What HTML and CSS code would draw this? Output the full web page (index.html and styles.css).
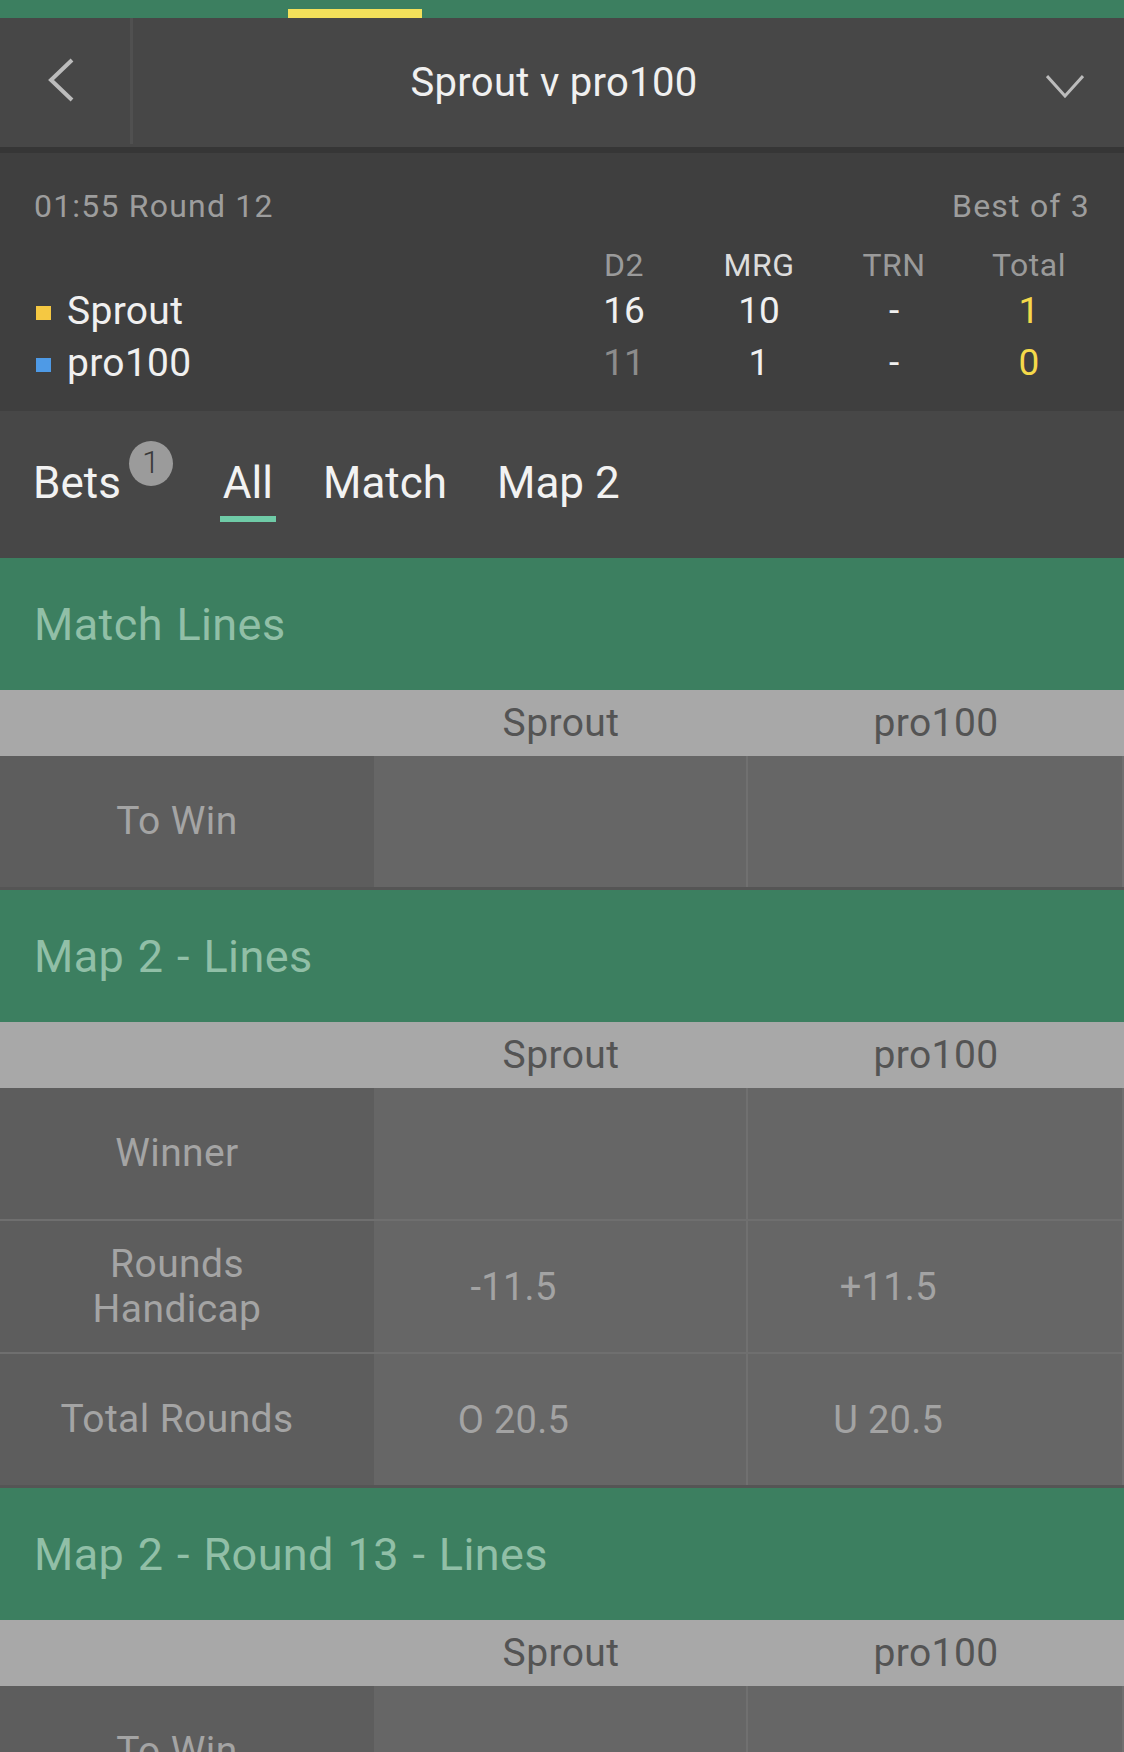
FILE: index.html
```html
<!DOCTYPE html>
<html lang="en">
<head>
    <meta charset="UTF-8">
    <meta name="viewport" content="width=device-width, initial-scale=1.0">
    <title>Sprout v pro100</title>
    <link rel="stylesheet" href="styles.css">
</head>
<body>
    <!-- Top nav strip -->
    <div class="top-strip">
        <span class="top-strip-mark"></span>
    </div>

    <!-- Event header -->
    <header class="event-header">
        <div class="back">
            <svg width="26" height="44" viewBox="0 0 26 44">
                <polyline points="24,2 3,22 24,42" fill="none" stroke="#bcbcbc" stroke-width="4"/>
            </svg>
        </div>
        <div class="event-title">Sprout v pro100</div>
        <div class="toggle">
            <svg width="38" height="24" viewBox="0 0 38 24">
                <polyline points="1,2 19,22 37,2" fill="none" stroke="#bcbcbc" stroke-width="3"/>
            </svg>
        </div>
    </header>

    <!-- Scoreboard -->
    <section class="scoreboard">
        <div class="score-meta">
            <span>01:55 Round 12</span>
            <span>Best of 3</span>
        </div>
        <div class="score-grid">
            <span></span>
            <span class="col-head">D2</span>
            <span class="col-head current">MRG</span>
            <span class="col-head">TRN</span>
            <span class="col-head">Total</span>

            <span class="team"><i class="swatch yellow"></i>Sprout</span>
            <span class="score">16</span>
            <span class="score">10</span>
            <span class="score">-</span>
            <span class="score total">1</span>

            <span class="team"><i class="swatch blue"></i>pro100</span>
            <span class="score dim">11</span>
            <span class="score">1</span>
            <span class="score">-</span>
            <span class="score total">0</span>
        </div>
    </section>

    <!-- Tabs -->
    <nav class="tabs">
        <div class="tab"><span class="tab-label">Bets<span class="badge">1</span></span></div>
        <div class="tab active"><span class="tab-label">All</span></div>
        <div class="tab"><span class="tab-label">Match</span></div>
        <div class="tab"><span class="tab-label">Map 2</span></div>
    </nav>

    <!-- Markets -->
    <section class="market">
        <div class="market-title">Match Lines</div>
        <div class="market-head">
            <span></span>
            <span>Sprout</span>
            <span>pro100</span>
        </div>
        <div class="market-row">
            <div class="market-label">To Win</div>
            <div class="odds"></div>
            <div class="odds"></div>
        </div>
    </section>

    <section class="market">
        <div class="market-title">Map 2 - Lines</div>
        <div class="market-head">
            <span></span>
            <span>Sprout</span>
            <span>pro100</span>
        </div>
        <div class="market-row">
            <div class="market-label">Winner</div>
            <div class="odds"></div>
            <div class="odds"></div>
        </div>
        <div class="market-row">
            <div class="market-label">Rounds Handicap</div>
            <div class="odds"><span class="line">-11.5</span></div>
            <div class="odds"><span class="line">+11.5</span></div>
        </div>
        <div class="market-row">
            <div class="market-label">Total Rounds</div>
            <div class="odds"><span class="line">O 20.5</span></div>
            <div class="odds"><span class="line">U 20.5</span></div>
        </div>
    </section>

    <section class="market">
        <div class="market-title">Map 2 - Round 13 - Lines</div>
        <div class="market-head">
            <span></span>
            <span>Sprout</span>
            <span>pro100</span>
        </div>
        <div class="market-row">
            <div class="market-label">To Win</div>
            <div class="odds"></div>
            <div class="odds"></div>
        </div>
    </section>
</body>
</html>
```

FILE: styles.css
```css
/* Live event page, dark theme */
body {
    margin: 0;
    padding: 0;
    background-color: #5d5d5d;
    font-family: Roboto, "Liberation Sans", sans-serif;
    color: #f0f0f0;
    overflow: hidden;
}

/* Top strip */
.top-strip {
    height: 18px;
    background-color: #3c7f60;
}

.top-strip-mark {
    display: block;
    width: 134px;
    height: 9px;
    margin-left: 288px;
    position: relative;
    top: 9px;
    background-color: #f3e05a;
}

/* Event header */
.event-header {
    display: flex;
    align-items: center;
    height: 129px;
    background-color: #474747;
    border-bottom: 6px solid #363636;
}

.back {
    width: 82px;
    height: 126px;
    padding-left: 48px;
    display: flex;
    align-items: center;
    align-self: flex-start;
    border-right: 3px solid #505050;
}

.back svg {
    margin-top: -2px;
}

.event-title {
    flex: 1;
    text-align: center;
    font-size: 40px;
    letter-spacing: 0.3px;
    color: #f0f0f0;
}

.toggle {
    width: 109px;
    padding-right: 40px;
    display: flex;
    justify-content: flex-end;
    margin-top: 6px;
}

/* Scoreboard */
.scoreboard {
    background-color: #3f3f3f;
    padding: 31px 40px 22px 34px;
}

.score-meta {
    display: flex;
    justify-content: space-between;
    font-size: 32px;
    letter-spacing: 1.2px;
    line-height: 44px;
    color: #9d9d9d;
    margin-right: -6px;
}

.score-grid {
    display: grid;
    grid-template-columns: 1fr repeat(4, 110px);
    column-gap: 25px;
    margin-top: 17px;
}

.col-head {
    text-align: center;
    font-size: 32px;
    letter-spacing: 0.5px;
    line-height: 40px;
    color: #9a9a9a;
}

.col-head.current {
    color: #dcdcdc;
}

.team {
    display: flex;
    align-items: center;
    font-size: 39px;
    letter-spacing: 0.3px;
    line-height: 52px;
    color: #f0f0f0;
}

.swatch {
    display: inline-block;
    width: 15px;
    height: 14px;
    margin: 4px 16px 0 2px;
}

.swatch.yellow {
    background-color: #f5c842;
}

.swatch.blue {
    background-color: #4e9ae6;
}

.score {
    text-align: center;
    font-size: 37px;
    line-height: 52px;
    color: #f0f0f0;
}

.score.dim {
    color: #8c8c8c;
}

.score.total {
    color: #f5d94a;
}

/* Tabs */
.tabs {
    display: flex;
    gap: 50px;
    padding: 46px 33px 36px;
    background-color: #474747;
}

.tab-label {
    display: flex;
    align-items: flex-start;
    font-size: 44px;
    line-height: 52px;
    color: #f2f2f2;
}

.tab::after {
    content: "";
    display: block;
    height: 6px;
    margin: 7px -3px 0;
}

.tab.active::after {
    background-color: #6fcba7;
}

.badge {
    width: 44px;
    height: 45px;
    margin: -16px 0 0 8px;
    border-radius: 50%;
    background-color: #9b9b9b;
    color: #3a3a3a;
    font-size: 32px;
    font-weight: 300;
    line-height: 42px;
    text-align: center;
}

/* Markets */
.market {
    border-bottom: 3px solid #555555;
}

.market-title {
    display: flex;
    align-items: center;
    height: 132px;
    padding-left: 34px;
    background-color: #3c7f60;
    font-size: 45px;
    letter-spacing: 0.4px;
    word-spacing: 2px;
    color: #91bfa7;
}

.market-head {
    display: grid;
    grid-template-columns: 374px 374px 1fr;
    align-items: center;
    height: 66px;
    background-color: #a8a8a8;
    font-size: 39px;
    letter-spacing: 0.4px;
    color: #545454;
}

.market-head span {
    text-align: center;
}

.market-row {
    display: grid;
    grid-template-columns: 374px 374px 1fr;
    min-height: 131px;
}

.market-row + .market-row {
    border-top: 2px solid #6f6f6f;
}

.market-label {
    display: flex;
    align-items: center;
    justify-content: center;
    padding: 0 57px 0 37px;
    background-color: #5d5d5d;
    text-align: center;
    font-size: 39px;
    letter-spacing: 0.4px;
    line-height: 45px;
    color: #a4a4a4;
}

.odds {
    display: flex;
    align-items: center;
    background-color: #666666;
    border-right: 2px solid #707070;
}

.odds .line {
    width: 75%;
    text-align: center;
    font-size: 38px;
    letter-spacing: 0.3px;
    color: #a3a3a3;
}
```
